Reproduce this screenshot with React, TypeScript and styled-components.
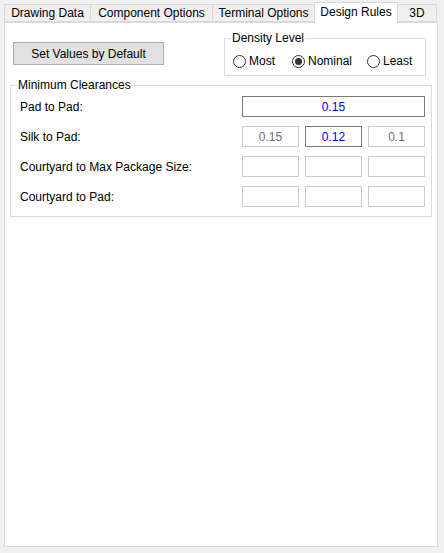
import React from 'react';
import styled, { createGlobalStyle } from 'styled-components';

const GlobalStyle = createGlobalStyle`
  html, body {
    margin: 0;
    padding: 0;
    background: #f0f0f0;
  }
  body {
    font-family: "Liberation Sans", Arial, sans-serif;
    font-size: 12px;
    color: #000;
  }
`;

const Window = styled.div`
  width: 444px;
  height: 553px;
  box-sizing: border-box;
  padding: 2px 6px 6px 4px;
  display: flex;
  flex-direction: column;
`;

const TabBar = styled.div`
  display: flex;
  align-items: flex-end;
  height: 20px;
`;

const Tab = styled.div<{ $width: number; $active?: boolean }>`
  box-sizing: border-box;
  width: ${p => p.$width}px;
  height: ${p => (p.$active ? 21 : 18)}px;
  margin-bottom: ${p => (p.$active ? -1 : 0)}px;
  margin-right: -1px;
  border: 1px solid #d9d9d9;
  border-bottom: ${p => (p.$active ? 'none' : '1px solid #d9d9d9')};
  background: ${p => (p.$active ? '#fff' : '#f0f0f0')};
  position: relative;
  z-index: ${p => (p.$active ? 1 : 0)};
  display: flex;
  align-items: ${p => (p.$active ? 'flex-start' : 'center')};
  padding-top: ${p => (p.$active ? 2 : 0)}px;
  justify-content: center;
  white-space: nowrap;
  line-height: 14px;
`;

const Panel = styled.div`
  flex: 1;
  background: #fff;
  border: 1px solid #d9d9d9;
  padding: 0 5px;
`;

const TopRow = styled.div`
  display: flex;
  justify-content: space-between;
  align-items: flex-start;
  height: 55px;
`;

const DefaultButton = styled.button`
  box-sizing: border-box;
  margin: 19px 0 0 3px;
  width: 151px;
  height: 23px;
  background: #e1e1e1;
  border: 1px solid #adadad;
  font: inherit;
  color: #000;
  padding: 0;
`;

const Group = styled.fieldset`
  margin: 0;
  border: 1px solid #dcdcdc;
  min-width: 0;
`;

const DensityGroup = styled(Group)`
  box-sizing: border-box;
  width: 202px;
  height: 45px;
  margin: 8px 6px 0 0;
  padding: 0 0 0 8px;
`;

const Legend = styled.legend<{ $shift: number }>`
  padding: 0 1px;
  margin-left: ${p => p.$shift}px;
  line-height: 14px;
`;

const RadioRow = styled.div`
  display: grid;
  grid-template-columns: 59px 75px auto;
  align-items: center;
  margin-top: 9px;
`;

const RadioItem = styled.label`
  display: flex;
  align-items: center;
  gap: 3px;
  line-height: 14px;
`;

const RadioCircle = styled.span<{ $checked?: boolean }>`
  box-sizing: border-box;
  width: 13px;
  height: 13px;
  border: 1px solid #333;
  border-radius: 50%;
  display: flex;
  align-items: center;
  justify-content: center;

  &::after {
    content: '';
    display: ${p => (p.$checked ? 'block' : 'none')};
    width: 7px;
    height: 7px;
    border-radius: 50%;
    background: #333;
  }
`;

const ClearanceGroup = styled(Group)`
  box-sizing: border-box;
  height: 139px;
  margin: 0;
  padding: 4px 6px 0 9px;
`;

const Rows = styled.div`
  display: flex;
  flex-direction: column;
  gap: 9px;
`;

const Row = styled.div`
  display: grid;
  grid-template-columns: 1fr 183px;
  align-items: center;
  height: 21px;
`;

const Label = styled.span`
  line-height: 14px;
`;

const Values = styled.div`
  display: grid;
  grid-template-columns: repeat(3, 1fr);
  gap: 6px;
`;

const ValueBox = styled.input<{ $enabled?: boolean }>`
  box-sizing: border-box;
  width: 100%;
  height: 21px;
  border: 1px solid ${p => (p.$enabled ? '#7a7a7a' : '#cccccc')};
  background: #fff;
  color: ${p => (p.$enabled ? '#0000ff' : '#6d6d6d')};
  font: inherit;
  text-align: center;
  padding: 0;
  outline: none;
`;

const WideBox = styled(ValueBox)`
  grid-column: 1 / -1;
`;

const tabs = [
  { label: 'Drawing Data', width: 87 },
  { label: 'Component Options', width: 123 },
  { label: 'Terminal Options', width: 103 },
  { label: 'Design Rules', width: 84, active: true },
  { label: '3D', width: 40 },
];

const densities = [
  { label: 'Most' },
  { label: 'Nominal', checked: true },
  { label: 'Least' },
];

type Cell = { value: string; enabled?: boolean };

const rows: { label: string; wide?: Cell; cells?: Cell[] }[] = [
  { label: 'Pad to Pad:', wide: { value: '0.15', enabled: true } },
  {
    label: 'Silk to Pad:',
    cells: [{ value: '0.15' }, { value: '0.12', enabled: true }, { value: '0.1' }],
  },
  { label: 'Courtyard to Max Package Size:', cells: [{ value: '' }, { value: '' }, { value: '' }] },
  { label: 'Courtyard to Pad:', cells: [{ value: '' }, { value: '' }, { value: '' }] },
];

export default function App() {
  return (
    <>
      <GlobalStyle />
      <Window>
        <TabBar>
          {tabs.map(t => (
            <Tab key={t.label} $width={t.width} $active={t.active}>
              {t.label}
            </Tab>
          ))}
        </TabBar>
        <Panel>
          <TopRow>
            <DefaultButton>Set Values by Default</DefaultButton>
            <DensityGroup>
              <Legend $shift={-2}>Density Level</Legend>
              <RadioRow>
                {densities.map(d => (
                  <RadioItem key={d.label}>
                    <RadioCircle $checked={d.checked} />
                    {d.label}
                  </RadioItem>
                ))}
              </RadioRow>
            </DensityGroup>
          </TopRow>
          <ClearanceGroup>
            <Legend $shift={-3}>Minimum Clearances</Legend>
            <Rows>
              {rows.map(r => (
                <Row key={r.label}>
                  <Label>{r.label}</Label>
                  <Values>
                    {r.wide ? (
                      <WideBox readOnly value={r.wide.value} $enabled={r.wide.enabled} />
                    ) : (
                      r.cells!.map((c, i) => (
                        <ValueBox key={i} readOnly value={c.value} $enabled={c.enabled} />
                      ))
                    )}
                  </Values>
                </Row>
              ))}
            </Rows>
          </ClearanceGroup>
        </Panel>
      </Window>
    </>
  );
}
